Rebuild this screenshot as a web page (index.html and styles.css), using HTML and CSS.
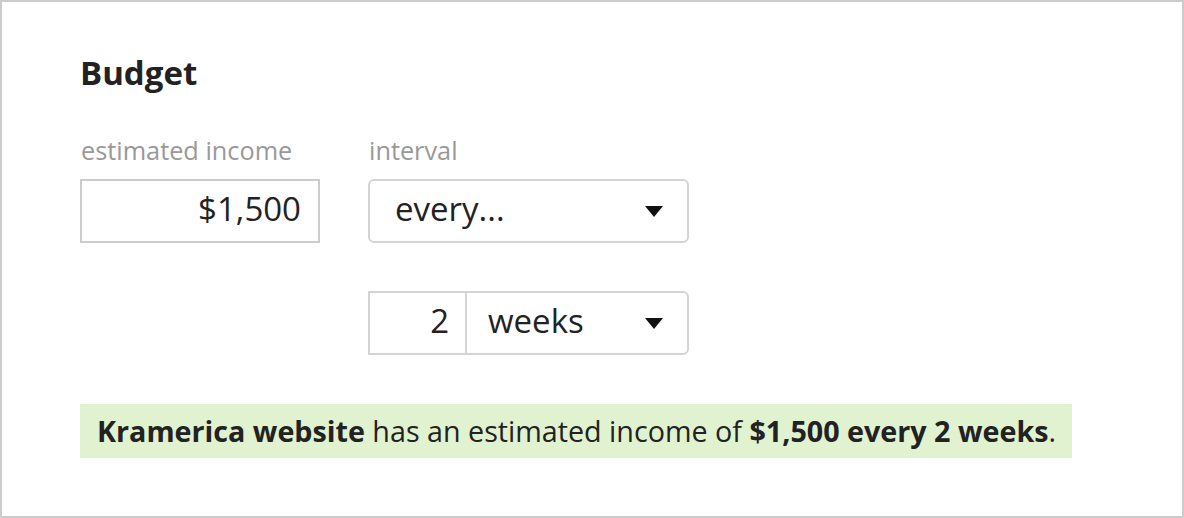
FILE: index.html
```html
<!DOCTYPE html>
<html>
<head>
<meta charset="utf-8">
<link rel="stylesheet" href="styles.css">
</head>
<body>
<div class="frame">
  <h1 class="title">Budget</h1>
  <div class="fields">
    <div class="field field-income">
      <div class="label">estimated income</div>
      <div class="input income">$1,500</div>
    </div>
    <div class="field field-interval">
      <div class="label">interval</div>
      <div class="select select-every">
        <span class="select-text">every...</span>
        <svg class="arrow" width="18" height="11" viewBox="0 0 18 11"><path d="M0 0 H18 L9 11 Z" fill="#111"/></svg>
      </div>
      <div class="combo">
        <div class="combo-num">2</div>
        <div class="combo-select">
          <span class="select-text">weeks</span>
          <svg class="arrow" width="18" height="11" viewBox="0 0 18 11"><path d="M0 0 H18 L9 11 Z" fill="#111"/></svg>
        </div>
      </div>
    </div>
  </div>
  <div class="summary"><b>Kramerica website</b> has an estimated income of <b>$1,500 every 2 weeks</b>.</div>
</div>
</body>
</html>
```
FILE: styles.css
```css
html, body {
  margin: 0;
  padding: 0;
  background: #fff;
}
body {
  font-family: "Open Sans", "Noto Sans", sans-serif;
  color: #222;
}
.frame {
  width: 1184px;
  height: 518px;
  box-sizing: border-box;
  border: 2px solid #cccccc;
  padding: 51px 0 0 78px;
}
.title {
  margin: 0;
  font-size: 33px;
  font-weight: 700;
  line-height: 40px;
  color: #222;
}
.fields {
  display: flex;
  gap: 48px;
  margin-top: 42px;
}
.label {
  font-size: 25.3px;
  line-height: 30px;
  color: #999;
  margin-left: 1px;
}
.input {
  margin-top: 14px;
  box-sizing: border-box;
  width: 240px;
  height: 64px;
  border: 2px solid #cccccc;
  font-size: 33px;
  line-height: 56px;
  text-align: right;
  padding-right: 17px;
  color: #222;
}
.select {
  margin-top: 14px;
  box-sizing: border-box;
  width: 321px;
  height: 64px;
  border: 2px solid #d4d4d4;
  border-radius: 6px;
  display: flex;
  align-items: center;
  justify-content: space-between;
  padding: 0 24px 0 25px;
  font-size: 33px;
  color: #222;
}
.select-text {
  line-height: 56px;
  padding-bottom: 4px;
}
.arrow {
  display: block;
}
.combo {
  margin-top: 48px;
  box-sizing: border-box;
  width: 321px;
  height: 64px;
  border: 2px solid #d4d4d4;
  border-radius: 0 6px 6px 0;
  display: flex;
  font-size: 33px;
}
.combo-num {
  box-sizing: border-box;
  width: 97px;
  border-right: 2px solid #d4d4d4;
  text-align: right;
  padding-right: 16px;
  line-height: 56px;
}
.combo-select {
  flex: 1;
  display: flex;
  align-items: center;
  justify-content: space-between;
  padding: 0 24px 0 21px;
}
.summary {
  margin-top: 49px;
  width: 992px;
  height: 54px;
  box-sizing: border-box;
  background: #e0f2cf;
  padding-left: 17px;
  font-size: 28.7px;
  line-height: 54px;
  color: #222;
}
.summary b {
  font-weight: 700;
}
```
